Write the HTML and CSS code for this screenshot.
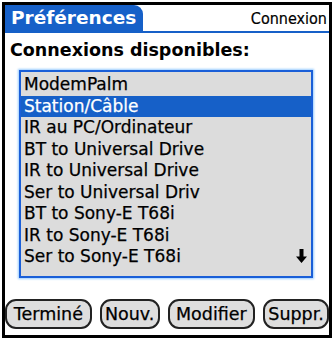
FILE: index.html
```html
<!DOCTYPE html>
<html>
<head>
<meta charset="utf-8">
<link rel="stylesheet" href="styles.css">
</head>
<body>
<div class="screen">
  <div class="header">
    <div class="tab">Préférences</div>
    <div class="panel">Connexion</div>
  </div>
  <div class="heading">Connexions disponibles:</div>
  <div class="list">
    <div class="item">ModemPalm</div>
    <div class="item selected">Station/Câble</div>
    <div class="item">IR au PC/Ordinateur</div>
    <div class="item">BT to Universal Drive</div>
    <div class="item">IR to Universal Drive</div>
    <div class="item">Ser to Universal Driv</div>
    <div class="item">BT to Sony-E T68i</div>
    <div class="item">IR to Sony-E T68i</div>
    <div class="item last">Ser to Sony-E T68i
      <svg class="arrow" width="11" height="14" viewBox="0 0 11 14"><path d="M3.5 0h4v7.5h3.5l-5.5 6.5-5.5-6.5h3.5z" fill="#000"/></svg>
    </div>
  </div>
  <div class="buttons">
    <div class="btn b1">Terminé</div>
    <div class="btn b2">Nouv.</div>
    <div class="btn b3">Modifier</div>
    <div class="btn b4">Suppr.</div>
  </div>
</div>
</body>
</html>
```
FILE: styles.css
```css
html, body {
  margin: 0;
  padding: 0;
  background: #fff;
}
body {
  font-family: "DejaVu Sans", sans-serif;
  color: #000;
}
.screen {
  box-sizing: border-box;
  margin: 2px;
  width: 330px;
  height: 336px;
  border: 3px solid #000;
  display: flex;
  flex-direction: column;
}
.header {
  display: flex;
  align-items: flex-end;
  height: 26px;
  border-bottom: 2px solid #1660c8;
}
.tab {
  box-sizing: border-box;
  width: 138px;
  height: 26px;
  background: #1660c8;
  color: #fff;
  font-weight: bold;
  font-size: 18.5px;
  line-height: 26px;
  padding-left: 6px;
  border-radius: 0 9px 0 0;
}
.panel {
  flex: 1;
  text-align: right;
  font-family: "DejaVu Sans Condensed", "DejaVu Sans", sans-serif;
  font-size: 16px;
  line-height: 25px;
  padding-right: 2px;
  -webkit-text-stroke: 0.2px #000;
}
.heading {
  font-weight: bold;
  font-size: 17.5px;
  line-height: 20px;
  margin-top: 7px;
  padding-left: 5px;
}
.list {
  box-sizing: border-box;
  margin: 10px 0 0 14px;
  width: 294px;
  height: 208px;
  background: #dcdcdc;
  border: 2px solid #1a5fd8;
  box-shadow: 0 0 2px 1px #9cf;
  padding-top: 2px;
}
.item {
  height: 21.5px;
  line-height: 21.5px;
  font-size: 17px;
  padding-left: 3px;
  white-space: nowrap;
  position: relative;
  -webkit-text-stroke: 0.25px currentColor;
}
.item.selected {
  background: #1660c8;
  color: #fff;
}
.arrow {
  position: absolute;
  right: 4px;
  top: 3px;
}
.buttons {
  display: flex;
  gap: 8px;
  margin-top: 21px;
}
.btn {
  box-sizing: border-box;
  height: 30px;
  border: 2px solid #222;
  border-radius: 11px;
  background: #dedede;
  font-size: 17.5px;
  line-height: 26px;
  text-align: center;
  white-space: nowrap;
  -webkit-text-stroke: 0.25px #000;
}
.b1 { width: 87px; }
.b2 { width: 60px; }
.b3 { width: 88px; }
.b4 { width: 66px; }
```
